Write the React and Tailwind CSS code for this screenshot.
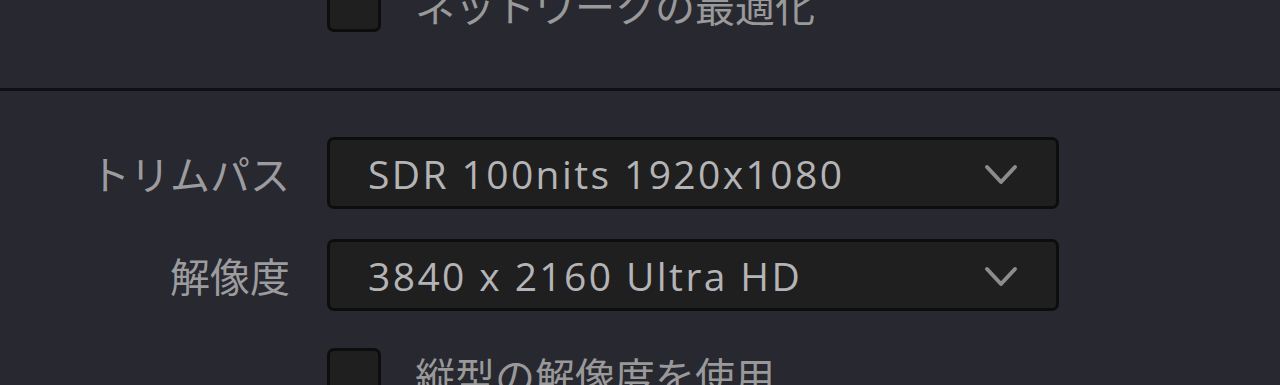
import React from 'react';

const jp = { fontFamily: '"Noto Sans CJK JP", "Noto Sans", sans-serif' };
const latin = { fontFamily: '"Open Sans", "Noto Sans CJK JP", sans-serif' };

const Checkbox = ({ label, className = '' }) => (
  <div className={`shrink-0 flex items-center pl-[327px] ${className}`}>
    <div className="w-[54px] h-[54px] shrink-0 rounded-[7px] border-[3px] border-[#0d0d0e] bg-[#1f1f20]" />
    <span className="ml-[34px] text-[40px] leading-none text-[#999999] whitespace-nowrap" style={jp}>
      {label}
    </span>
  </div>
);

const Select = ({ label, value, className = '' }) => (
  <div className={`shrink-0 flex items-center ${className}`}>
    <div className="w-[290px] text-right text-[40px] leading-none text-[#9c9c9e] whitespace-nowrap" style={jp}>
      {label}
    </div>
    <div className="ml-[37px] w-[732px] h-[72px] rounded-[7px] border-[3px] border-[#0d0d0e] bg-[#1f1f20] flex items-center justify-between pl-[38px] pr-[38px]">
      <span className="text-[39px] tracking-[2.4px] leading-none text-[#b4b4b6] whitespace-nowrap" style={latin}>
        {value}
      </span>
      <svg width="34" height="24" viewBox="0 0 34 24" className="mt-[3px]">
        <polyline points="3,4 17,19 31,4" fill="none" stroke="#8c8c8e" strokeWidth="4" strokeLinecap="round" strokeLinejoin="round" />
      </svg>
    </div>
  </div>
);

export default function App() {
  return (
    <div className="w-[1280px] h-[385px] overflow-hidden bg-[#282830] flex flex-col">
      <Checkbox label="ネットワークの最適化" className="-mt-[22px]" />
      <div className="shrink-0 mt-[56px] h-[3px] w-full bg-[#101012]" />
      <Select label="トリムパス" value="SDR 100nits 1920x1080" className="mt-[46px]" />
      <Select label="解像度" value="3840 x 2160 Ultra HD" className="mt-[30px]" />
      <Checkbox label="縦型の解像度を使用" className="mt-[37px]" />
    </div>
  );
}
